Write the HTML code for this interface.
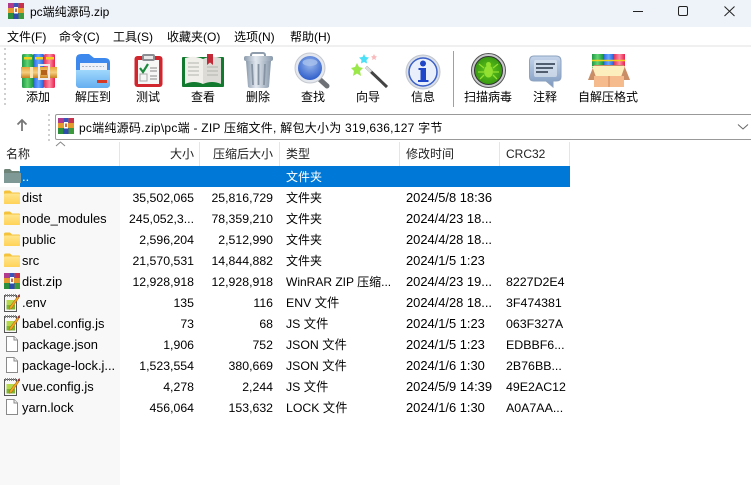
<!DOCTYPE html>
<html><head><meta charset="utf-8"><style>
html,body{margin:0;padding:0}
body{width:751px;height:485px;overflow:hidden;background:#fff;position:relative;font:12px "Liberation Sans","Noto Sans CJK SC",sans-serif;color:#000}
div,span,svg{position:absolute}
.t{white-space:nowrap;line-height:16px;font-size:12px}
.n{left:22px;font-size:12.9px}
.r{text-align:right;width:90px;font-size:12.3px}
.a{left:104px}
.b{left:183px}
.y{left:286px;font-size:12.3px}
.d{left:406px;font-size:12.9px}
.x{left:506px;font-size:12.4px}
.c{text-align:center;width:80px;font-size:12px;top:89px;line-height:17px;color:#000}
.m{top:29px;font-size:12px;line-height:16px;white-space:nowrap}
.h{top:146px;color:#222;font-size:12px;line-height:16px;white-space:nowrap}
.s{width:1px;background:#e5e5e5;top:142px;height:24px}
</style></head><body>
<svg width="0" height="0" style="position:absolute"><defs>
<linearGradient id="yf" x1="0" y1="0" x2="0" y2="1"><stop offset="0" stop-color="#ffe68f"/><stop offset="1" stop-color="#ffd257"/></linearGradient>
<symbol id="rar" viewBox="0 0 16 16"><rect x="0" y="0" width="5.4" height="16" fill="#b03a8c"/><rect x="5.300" y="0" width="5.4" height="16" fill="#3a55b8"/><rect x="10.600" y="0" width="5.4" height="16" fill="#c7324a"/><rect x="0" y="10" width="5.4" height="6" fill="#2c8f3d"/><rect x="5.300" y="10" width="5.4" height="6" fill="#2f4cad"/><rect x="10.600" y="10" width="5.4" height="6" fill="#3c9a3d"/><rect x="0" y="5" width="16" height="5" fill="#e49a2c"/><rect x="6" y="4" width="4" height="6.500" fill="#fff"/><rect x="7.200" y="5.500" width="1.600" height="3.500" fill="#c2451c"/></symbol>
<symbol id="fold" viewBox="0 0 18 16"><path d="M1 3Q1 1.500 2.500 1.500H7L9 3.500H16Q17 3.500 17 4.500V14Q17 15 16 15H2Q1 15 1 14Z" fill="#f5c33b"/><rect x="1" y="4.500" width="16" height="10.500" rx="1" fill="url(#yf)"/></symbol>
<symbol id="txt" viewBox="0 0 18 20"><path d="M1.500 2.500H13.500V18.500H1.500Z" fill="#f7f7f7" stroke="#555"/><path d="M2.500 1V4M4.500 1V4M6.500 1V4M8.500 1V4M10.500 1V4M12.500 1V4" stroke="#888"/><rect x="3.500" y="7" width="8.500" height="9.500" fill="#b5d84a"/><rect x="3.500" y="12" width="8.500" height="4.500" fill="#7fb52e"/><path d="M6.500 14L14.500 3.500L16 4.700L8.500 15.500L6 16.500Z" fill="#f2a51f" stroke="#a0620f" stroke-width=".5"/><path d="M14.500 3L16.500 1L17 3.500L16 4.500Z" fill="#8c2020"/></symbol>
<symbol id="blank" viewBox="0 0 16 18"><path d="M2.500 1.500H10L13.500 5V16.500H2.500Z" fill="#fff" stroke="#8a8a8a"/><path d="M10 1.500V5H13.500" fill="#f3f3f3" stroke="#8a8a8a"/></symbol>
<linearGradient id="gg" x1="0" y1="0" x2="1" y2="0"><stop offset="0" stop-color="#1e9a45"/><stop offset=".5" stop-color="#62d472"/><stop offset="1" stop-color="#1e9a45"/></linearGradient>
<linearGradient id="bb" x1="0" y1="0" x2="1" y2="0"><stop offset="0" stop-color="#2560d8"/><stop offset=".5" stop-color="#66a6ff"/><stop offset="1" stop-color="#2560d8"/></linearGradient>
<linearGradient id="rr" x1="0" y1="0" x2="1" y2="0"><stop offset="0" stop-color="#e0335a"/><stop offset=".5" stop-color="#ff8ca5"/><stop offset="1" stop-color="#e8204a"/></linearGradient>
<linearGradient id="fb" x1="0" y1="0" x2="0" y2="1"><stop offset="0" stop-color="#a0d8fc"/><stop offset="1" stop-color="#64aef0"/></linearGradient>
<linearGradient id="cn" x1="0" y1="0" x2="1" y2="0"><stop offset="0" stop-color="#8a9aac"/><stop offset=".4" stop-color="#e2e8ef"/><stop offset="1" stop-color="#8a9aac"/></linearGradient>
<linearGradient id="bl" x1="0" y1="0" x2="0" y2="1"><stop offset="0" stop-color="#e8a63a"/><stop offset=".5" stop-color="#f6cf80"/><stop offset="1" stop-color="#c9811e"/></linearGradient>
<radialGradient id="mg" cx=".5" cy=".35" r=".7"><stop offset="0" stop-color="#9ab8ec"/><stop offset="1" stop-color="#2557c8"/></radialGradient>
<radialGradient id="vg" cx=".5" cy=".5" r=".6"><stop offset="0" stop-color="#62c81c"/><stop offset="1" stop-color="#2f8f10"/></radialGradient>
<linearGradient id="cm" x1="0" y1="0" x2="0" y2="1"><stop offset="0" stop-color="#c5d5ea"/><stop offset="1" stop-color="#7d99c0"/></linearGradient>
</defs></svg>

<div style="left:0;top:0;width:751px;height:27px;background:#eef2f9"></div>
<svg style="left:8px;top:3px" width="16" height="16"><use href="#rar"/></svg>
<div class="t" style="left:30px;top:4px">pc端纯源码.zip</div>
<svg style="left:630px;top:0" width="121" height="27" fill="none" stroke="#222" stroke-width="1"><path d="M3 11.500H13"/><rect x="48.500" y="6.500" width="9" height="9" rx="1.500"/><path d="M94.500 6.500L104.500 16M104.500 6.500L94.500 16"/></svg>

<div class="m" style="left:7px">文件(F)</div>
<div class="m" style="left:59px">命令(C)</div>
<div class="m" style="left:113px">工具(S)</div>
<div class="m" style="left:167px">收藏夹(O)</div>
<div class="m" style="left:234px">选项(N)</div>
<div class="m" style="left:290px">帮助(H)</div>
<div style="left:0;top:45px;width:751px;height:2px;background:#f0f0f0"></div>

<svg style="left:4px;top:47px" width="4" height="62" fill="#cfcfcf"><rect y="1" width="2" height="2"/><rect y="6" width="2" height="2"/><rect y="11" width="2" height="2"/><rect y="16" width="2" height="2"/><rect y="21" width="2" height="2"/><rect y="26" width="2" height="2"/><rect y="31" width="2" height="2"/><rect y="36" width="2" height="2"/><rect y="41" width="2" height="2"/><rect y="46" width="2" height="2"/><rect y="51" width="2" height="2"/><rect y="56" width="2" height="2"/></svg>

<svg style="left:21px;top:54px" width="36" height="35"><rect x="1" y="0" width="11" height="34" rx="1.500" fill="url(#gg)"/><rect x="12" y="0" width="11" height="34" rx="1" fill="url(#bb)"/><rect x="23" y="0" width="11" height="34" rx="1.500" fill="url(#rr)"/><rect x="3" y="3" width="8" height="2.500" fill="#f3d21d"/><rect x="14" y="3" width="8" height="2.500" fill="#f3d21d"/><rect x="25" y="3" width="8" height="2.500" fill="#f3d21d"/><rect x="0" y="13" width="36" height="11" fill="url(#bl)"/><rect x="9" y="13" width="3" height="11" fill="#fbe4ae"/><rect x="18" y="11" width="10" height="14" fill="none" stroke="#ececec" stroke-width="2"/><rect x="20" y="16" width="6" height="5" fill="#b5621a"/></svg>

<svg style="left:75px;top:54px" width="36" height="35"><path d="M1 5Q1 0 6 0H14L19 4H30Q35 4 35 9V30Q35 34 31 34H5Q1 34 1 30Z" fill="#3d88ec"/><rect x="5" y="9" width="27" height="10" fill="#eef2f8"/><path d="M7 12.500H29" stroke="#a9b4c4" stroke-dasharray="2 1.500"/><path d="M1 16H35V29Q35 34 31 34H5Q1 34 1 29Z" fill="url(#fb)"/><rect x="22" y="26" width="10" height="3" fill="#d83a28"/></svg>

<svg style="left:134px;top:54px" width="29" height="34"><rect x="0.500" y="2" width="28" height="31" rx="3" fill="#d2262f"/><rect x="4" y="6" width="21" height="24" fill="#f6f6f6"/><rect x="8" y="0" width="13" height="7" rx="2" fill="#8b8f93"/><rect x="10" y="2" width="9" height="3" fill="#e8e8e8"/><path d="M6 14L9 18L14 10" fill="none" stroke="#1c8a3d" stroke-width="2.200"/><rect x="6" y="20" width="7" height="7" fill="none" stroke="#aaa"/><path d="M16 14H23M16 17H23M16 22H23M16 25H23" stroke="#888"/></svg>

<svg style="left:182px;top:54px" width="43" height="34"><rect x="0" y="3" width="42" height="30" rx="1" fill="#117a2f"/><path d="M3 4Q12 1 21 5V30Q12 26 3 30Z" fill="#f0efe9"/><path d="M39 4Q30 1 21 5V30Q30 26 39 30Z" fill="#dcdbd5"/><path d="M6 9H17M6 13H17M6 17H17M6 21H17M25 13H36M25 17H36M25 21H36" stroke="#b5b5b0"/><path d="M25 0H31V11L28 8.500L25 11Z" fill="#c22a38"/></svg>

<svg style="left:243px;top:52px" width="31" height="37"><rect x="8" y="1" width="14" height="5" rx="2" fill="none" stroke="#8e9cac" stroke-width="2"/><rect x="1" y="4" width="29" height="5" rx="2" fill="url(#cn)"/><path d="M3 9H28L26 35Q25 36 23 36H8Q6 36 5 35Z" fill="url(#cn)"/><path d="M9 12L10 33M15.500 12V33M22 12L21 33" stroke="#8593a3" stroke-width="1.800"/></svg>

<svg style="left:294px;top:52px" width="37" height="37"><path d="M22 24L33 34" stroke="#6e7175" stroke-width="5" stroke-linecap="round"/><circle cx="16" cy="16" r="15" fill="#e4e7ed" stroke="#c5c9d0"/><circle cx="16" cy="16" r="12" fill="url(#mg)"/><ellipse cx="16" cy="10.500" rx="7.500" ry="3.500" fill="#a8c0ec" opacity=".8"/></svg>

<svg style="left:351px;top:53px" width="37" height="36"><path d="M15 14L36 34" stroke="#444" stroke-width="3"/><path d="M15 14L20 19" stroke="#ddd" stroke-width="3"/><path d="M6 10L8 14L12 15L9 18L10 23L6 20.500L2 23L3 18L0 15L4 14Z" fill="#9be84a"/><path d="M13 1L14.500 4L18 4.500L15.500 7L16 10.500L13 9L10 10.500L10.500 7L8 4.500L11.500 4Z" fill="#4be0f7"/><path d="M23 1L24 3L26 3.500L24.500 5L25 7L23 6L21 7L21.500 5L20 3.500L22 3Z" fill="#f9bcbe"/></svg>

<svg style="left:405px;top:54px" width="36" height="36"><circle cx="18" cy="18" r="17" fill="#dadfe8" stroke="#c0c4cc"/><circle cx="18" cy="18" r="14" fill="#eaf0fb" stroke="#3a5fc8" stroke-width="1.500"/><circle cx="18" cy="9.500" r="3" fill="#1f45c8"/><path d="M13.500 14H21V26H23.500V28H13V26H15.500V16H13.500Z" fill="#1f45c8"/></svg>

<div style="left:453px;top:51px;width:1px;height:56px;background:#a0a0a0"></div>

<svg style="left:471px;top:53px" width="35" height="35"><circle cx="17.500" cy="17.500" r="17" fill="#c9cbcd" stroke="#555"/><circle cx="17.500" cy="17.500" r="14" fill="url(#vg)" stroke="#333"/><ellipse cx="17.500" cy="18.500" rx="4.500" ry="6" fill="#92e030"/><circle cx="17.500" cy="11.500" r="2.500" fill="#92e030"/><path d="M8 11L13 15M27 11L22 15M7 19H13M28 19H22M9 26L13 22M26 26L22 22" stroke="#92e030" stroke-width="1.300"/></svg>

<svg style="left:529px;top:55px" width="33" height="33"><path d="M5 1H27Q32 1 32 6V22Q32 26 27 26H24V32L17 26H5Q0.500 26 0.500 22V6Q0.500 1 5 1Z" fill="url(#cm)" stroke="#8ea3c0"/><rect x="5" y="5" width="23" height="17" rx="2" fill="#dbe5f1" opacity=".7"/><path d="M7 9H26M7 13H24M7 17H19" stroke="#3f4c5e" stroke-width="1.800"/></svg>

<svg style="left:587px;top:54px" width="44" height="34"><rect x="5" y="0" width="11" height="14" fill="url(#gg)"/><rect x="16" y="0" width="11" height="14" fill="url(#bb)"/><rect x="27" y="0" width="11" height="14" fill="url(#rr)"/><path d="M5 6.500H38" stroke="#f3d21d" stroke-width="1.500"/><path d="M1 26L7 11H37L43 26Z" fill="#c98e66"/><path d="M5 12H38L34 23H9Z" fill="#fdeebd"/><rect x="7" y="22" width="30" height="11" fill="#f6bb8c"/><path d="M22 22V33" stroke="#d3895c"/></svg>

<div class="c" style="left:-2px">添加</div>
<div class="c" style="left:53px">解压到</div>
<div class="c" style="left:108px">测试</div>
<div class="c" style="left:163px">查看</div>
<div class="c" style="left:218px">删除</div>
<div class="c" style="left:273px">查找</div>
<div class="c" style="left:328px">向导</div>
<div class="c" style="left:383px">信息</div>
<div class="c" style="left:448px">扫描病毒</div>
<div class="c" style="left:505px">注释</div>
<div class="c" style="left:568px">自解压格式</div>

<svg style="left:48px;top:113px" width="4" height="28" fill="#cfcfcf"><rect y="1" width="2" height="2"/><rect y="6" width="2" height="2"/><rect y="11" width="2" height="2"/><rect y="16" width="2" height="2"/><rect y="21" width="2" height="2"/><rect y="26" width="2" height="2"/></svg>
<svg style="left:15px;top:118px" width="14" height="14" fill="none" stroke="#777" stroke-width="1.800"><path d="M7 13V2M2.500 6.500L7 2L11.500 6.500"/></svg>
<div style="left:55px;top:114px;width:700px;height:24px;border:1px solid #999;border-radius:2px"></div>
<svg style="left:58px;top:118px" width="16" height="16"><use href="#rar"/></svg>
<div class="t" style="left:79px;top:120px;letter-spacing:.25px">pc端纯源码.zip\pc端 - ZIP 压缩文件, 解包大小为 319,636,127 字节</div>
<svg style="left:737px;top:123px" width="12" height="8" fill="none" stroke="#666"><path d="M1 1.500L6 6L11 1.500"/></svg>

<svg style="left:55px;top:141px" width="12" height="6" fill="none" stroke="#888"><path d="M1 5L5.500 1L10 5"/></svg>
<div class="s" style="left:119px"></div><div class="s" style="left:199px"></div><div class="s" style="left:279px"></div><div class="s" style="left:399px"></div><div class="s" style="left:499px"></div><div class="s" style="left:569px"></div>
<div class="h" style="left:6px">名称</div>
<div class="h" style="left:104px;width:90px;text-align:right">大小</div>
<div class="h" style="left:183px;width:90px;text-align:right">压缩后大小</div>
<div class="h" style="left:286px">类型</div>
<div class="h" style="left:406px">修改时间</div>
<div class="h" style="left:506px">CRC32</div>

<div style="left:0;top:187px;width:120px;height:298px;background:#f8f8f8"></div>
<div style="left:20px;top:166px;width:550px;height:21px;background:#0078d7"></div>
<svg style="left:3px;top:168px" width="18" height="16"><path d="M1 2.500Q1 1 2.500 1H7L9 3H16Q17 3 17 4V14Q17 15 16 15H2Q1 15 1 14Z" fill="#6f8478"/><rect x="1" y="5" width="17" height="10" fill="#7f9a96"/></svg>
<div class="t n" style="top:169px;color:#fff">..</div>
<div class="t" style="left:286px;top:169px;color:#fff">文件夹</div>

<svg style="left:3px;top:189px" width="18" height="16"><use href="#fold"/></svg>
<svg style="left:3px;top:210px" width="18" height="16"><use href="#fold"/></svg>
<svg style="left:3px;top:231px" width="18" height="16"><use href="#fold"/></svg>
<svg style="left:3px;top:252px" width="18" height="16"><use href="#fold"/></svg>
<svg style="left:4px;top:273px" width="16" height="16"><use href="#rar"/></svg>
<svg style="left:3px;top:293px" width="18" height="20"><use href="#txt"/></svg>
<svg style="left:3px;top:314px" width="18" height="20"><use href="#txt"/></svg>
<svg style="left:4px;top:335px" width="16" height="18"><use href="#blank"/></svg>
<svg style="left:4px;top:356px" width="16" height="18"><use href="#blank"/></svg>
<svg style="left:3px;top:377px" width="18" height="20"><use href="#txt"/></svg>
<svg style="left:4px;top:398px" width="16" height="18"><use href="#blank"/></svg>

<div class="t n" style="top:190px">dist</div><div class="t r a" style="top:190px">35,502,065</div><div class="t r b" style="top:190px">25,816,729</div><div class="t" style="left:286px;top:190px">文件夹</div><div class="t d" style="top:190px">2024/5/8 18:36</div>
<div class="t n" style="top:211px">node_modules</div><div class="t r a" style="top:211px">245,052,3...</div><div class="t r b" style="top:211px">78,359,210</div><div class="t" style="left:286px;top:211px">文件夹</div><div class="t d" style="top:211px">2024/4/23 18...</div>
<div class="t n" style="top:232px">public</div><div class="t r a" style="top:232px">2,596,204</div><div class="t r b" style="top:232px">2,512,990</div><div class="t" style="left:286px;top:232px">文件夹</div><div class="t d" style="top:232px">2024/4/28 18...</div>
<div class="t n" style="top:253px">src</div><div class="t r a" style="top:253px">21,570,531</div><div class="t r b" style="top:253px">14,844,882</div><div class="t" style="left:286px;top:253px">文件夹</div><div class="t d" style="top:253px">2024/1/5 1:23</div>
<div class="t n" style="top:274px">dist.zip</div><div class="t r a" style="top:274px">12,928,918</div><div class="t r b" style="top:274px">12,928,918</div><div class="t" style="left:286px;top:274px">WinRAR ZIP 压缩...</div><div class="t d" style="top:274px">2024/4/23 19...</div><div class="t x" style="top:274px">8227D2E4</div>
<div class="t n" style="top:295px">.env</div><div class="t r a" style="top:295px">135</div><div class="t r b" style="top:295px">116</div><div class="t y" style="top:295px">ENV 文件</div><div class="t d" style="top:295px">2024/4/28 18...</div><div class="t x" style="top:295px">3F474381</div>
<div class="t n" style="top:316px">babel.config.js</div><div class="t r a" style="top:316px">73</div><div class="t r b" style="top:316px">68</div><div class="t y" style="top:316px">JS 文件</div><div class="t d" style="top:316px">2024/1/5 1:23</div><div class="t x" style="top:316px">063F327A</div>
<div class="t n" style="top:337px">package.json</div><div class="t r a" style="top:337px">1,906</div><div class="t r b" style="top:337px">752</div><div class="t y" style="top:337px">JSON 文件</div><div class="t d" style="top:337px">2024/1/5 1:23</div><div class="t x" style="top:337px">EDBBF6...</div>
<div class="t n" style="top:358px">package-lock.j...</div><div class="t r a" style="top:358px">1,523,554</div><div class="t r b" style="top:358px">380,669</div><div class="t y" style="top:358px">JSON 文件</div><div class="t d" style="top:358px">2024/1/6 1:30</div><div class="t x" style="top:358px">2B76BB...</div>
<div class="t n" style="top:379px">vue.config.js</div><div class="t r a" style="top:379px">4,278</div><div class="t r b" style="top:379px">2,244</div><div class="t y" style="top:379px">JS 文件</div><div class="t d" style="top:379px">2024/5/9 14:39</div><div class="t x" style="top:379px">49E2AC12</div>
<div class="t n" style="top:400px">yarn.lock</div><div class="t r a" style="top:400px">456,064</div><div class="t r b" style="top:400px">153,632</div><div class="t y" style="top:400px">LOCK 文件</div><div class="t d" style="top:400px">2024/1/6 1:30</div><div class="t x" style="top:400px">A0A7AA...</div>
</body></html>
